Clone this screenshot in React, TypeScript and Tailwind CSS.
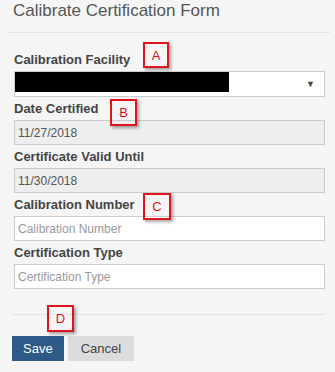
import React from 'react';

// ── Annotation marker ────────────────────────────────────────────────────────

const Marker = ({ letter, className }: { letter: string; className: string }) => (
  <div
    className={`absolute flex items-center justify-center border-2 border-[#e0141e] text-[#e0141e] text-[13px] leading-none shadow-[2px_2px_3px_rgba(0,0,0,0.35)] ${className}`}
  >
    {letter}
  </div>
);

// ── Field pieces ─────────────────────────────────────────────────────────────

const Label = ({ children }: { children: React.ReactNode }) => (
  <div className="text-[13px] leading-[15px] font-bold text-[#444] mb-[4px]">{children}</div>
);

const TextInput = ({ value, placeholder, disabled }: { value?: string; placeholder?: string; disabled?: boolean }) => (
  <div
    className={`h-[25px] border border-[#ccc] flex items-center px-[3px] text-[12px] ${
      disabled ? 'bg-[#eee] text-[#555]' : 'bg-white text-[#999]'
    }`}
  >
    {value ?? placeholder}
  </div>
);

export default function App() {
  return (
    <div
      className="relative w-[335px] h-[372px] overflow-hidden bg-[#f5f5f5] pl-[7px] pr-[5px]"
      style={{ fontFamily: '"Liberation Sans", Arial, sans-serif' }}
    >
      {/* Title */}
      <div className="h-[33px] border-b border-[#e3e3e3] pl-[6px] pt-[1px] text-[17px] leading-[19px] text-[#555]">
        Calibrate Certification Form
      </div>

      {/* Fields */}
      <div className="pl-[7px] pr-[5px] pt-[19px] flex flex-col gap-[4px]">
        <div>
          <Label>Calibration Facility</Label>
          <div className="h-[26px] border border-[#ccc] bg-white flex items-start justify-between">
            <div className="w-[214px] h-[20px] bg-black" />
            <span className="text-[9px] leading-none text-[#444] mt-[8px] mr-[9px]">▼</span>
          </div>
        </div>
        <div>
          <Label>Date Certified</Label>
          <TextInput value="11/27/2018" disabled />
        </div>
        <div>
          <Label>Certificate Valid Until</Label>
          <TextInput value="11/30/2018" disabled />
        </div>
        <div>
          <Label>Calibration Number</Label>
          <TextInput placeholder="Calibration Number" />
        </div>
        <div>
          <Label>Certification Type</Label>
          <TextInput placeholder="Certification Type" />
        </div>
      </div>

      {/* Footer */}
      <div className="ml-[5px] mr-[5px] mt-[25px] border-t border-[#e3e3e3] pt-[21px] flex gap-[4px]">
        <button className="h-[25px] px-[11px] bg-[#2d5a86] text-white text-[13px]">Save</button>
        <button className="h-[25px] px-[13px] bg-[#dcdcdc] text-[#444] text-[13px]">Cancel</button>
      </div>

      {/* Annotations */}
      <Marker letter="A" className="left-[143px] top-[42px] w-[26px] h-[26px]" />
      <Marker letter="B" className="left-[110px] top-[99px] w-[27px] h-[27px]" />
      <Marker letter="C" className="left-[143px] top-[193px] w-[28px] h-[27px]" />
      <Marker letter="D" className="left-[47px] top-[305px] w-[27px] h-[27px]" />
    </div>
  );
}
